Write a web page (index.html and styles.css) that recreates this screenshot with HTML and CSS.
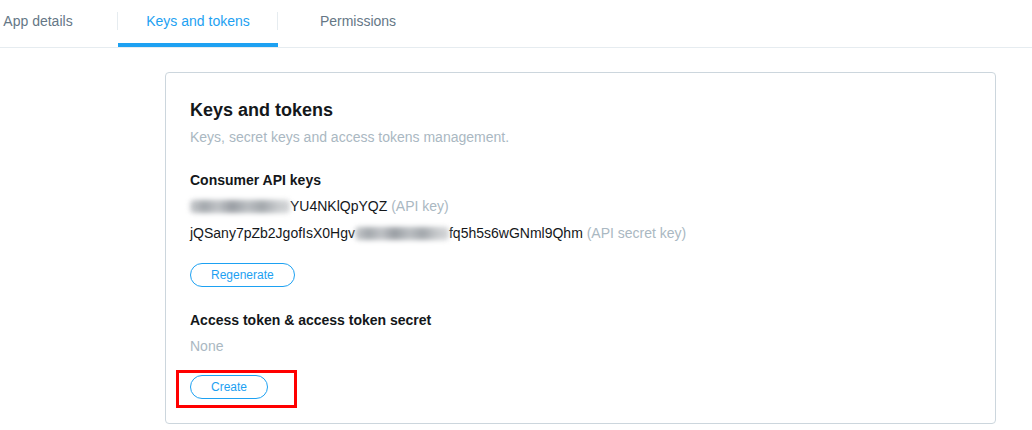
FILE: index.html
```html
<!DOCTYPE html>
<html lang="en">
<head>
<meta charset="utf-8">
<title>Keys and tokens</title>
<link rel="stylesheet" href="styles.css">
</head>
<body>
<nav class="tabs">
  <div class="tab">App details</div>
  <div class="tab tab-active">Keys and tokens</div>
  <div class="tab">Permissions</div>
</nav>
<main class="content">
  <section class="card">
    <h1 class="card-title">Keys and tokens</h1>
    <p class="card-sub">Keys, secret keys and access tokens management.</p>

    <h2 class="section-title">Consumer API keys</h2>
    <div class="key-line"><span class="blur blur-key"></span>YU4NKlQpYQZ <span class="muted">(API key)</span></div>
    <div class="key-line">jQSany7pZb2JgofIsX0Hgv<span class="blur blur-secret"></span>fq5h5s6wGNml9Qhm <span class="muted">(API secret key)</span></div>
    <div class="btn-row"><button class="btn">Regenerate</button></div>

    <h2 class="section-title">Access token &amp; access token secret</h2>
    <div class="none">None</div>
    <div class="highlight"><button class="btn btn-create">Create</button></div>
  </section>
</main>
</body>
</html>
```

FILE: styles.css
```css
* { box-sizing: border-box; }
html, body { margin: 0; padding: 0; background: #ffffff; }
body {
  font-family: "Liberation Sans", Arial, sans-serif;
  font-size: 14px;
  color: #14171a;
  width: 1032px;
  height: 430px;
  overflow: hidden;
}

.tabs {
  display: flex;
  border-bottom: 1px solid #e6ecf0;
  height: 48px;
}
.tabs .tab:first-child { margin-left: -42px; }
.tab {
  position: relative;
  width: 160px;
  flex: none;
  text-align: center;
  line-height: 20px;
  padding-top: 11px;
  height: 47px;
  color: #657786;
  border-bottom: 4px solid transparent;
}
.tab::after {
  content: "";
  position: absolute;
  right: 0;
  top: 12px;
  width: 1px;
  height: 18px;
  background: #e6ecf0;
}
.tab:last-child::after { display: none; }
.tab-active {
  color: #1da1f2;
  border-bottom-color: #1da1f2;
}

.content {
  padding: 24px 0 0 165px;
}
.card {
  width: 831px;
  height: 352px;
  border: 1px solid #ccd6dd;
  border-radius: 4px;
  padding: 25px 24px 0 24px;
}
.card-title {
  margin: 0;
  font-size: 18px;
  line-height: 24px;
  font-weight: bold;
  color: #14171a;
}
.card-sub {
  margin: 5px 0 0;
  line-height: 20px;
  color: #aab8c2;
}
.section-title {
  margin: 23px 0 0;
  font-size: 14px;
  line-height: 20px;
  font-weight: bold;
}
.section-title + .key-line { margin-top: 3px; }
.key-line {
  line-height: 27px;
  white-space: nowrap;
}
.muted { color: #aab8c2; }
.blur {
  display: inline-block;
  vertical-align: top;
  height: 13px;
  margin-top: 7px;
  border-radius: 4px;
  background:
    linear-gradient(90deg,
      #c4c7ca 0%, #9a9fa4 14%, #b9bcc0 28%, #8f949a 42%,
      #b3b7bb 58%, #999ea3 72%, #c2c5c8 88%, #d0d2d4 100%);
  filter: blur(2.5px);
  opacity: 0.9;
}
.blur-key { width: 100px; }
.blur-secret { width: 94px; }

.btn-row { margin-top: 16px; }
.btn {
  display: inline-block;
  height: 24px;
  padding: 0 20px;
  border: 1px solid #1da1f2;
  border-radius: 100px;
  background: #ffffff;
  color: #1da1f2;
  font-family: "Liberation Sans", Arial, sans-serif;
  font-size: 12px;
  line-height: 22px;
}
.none {
  margin-top: 6px;
  line-height: 20px;
  color: #aab8c2;
}
.highlight {
  display: inline-block;
  margin: 14px 0 0 -14px;
  border: 3px solid #ff0000;
  padding: 2px 26px 6px 11px;
  line-height: 0;
}
.btn-create { padding: 0 20px; }
```
